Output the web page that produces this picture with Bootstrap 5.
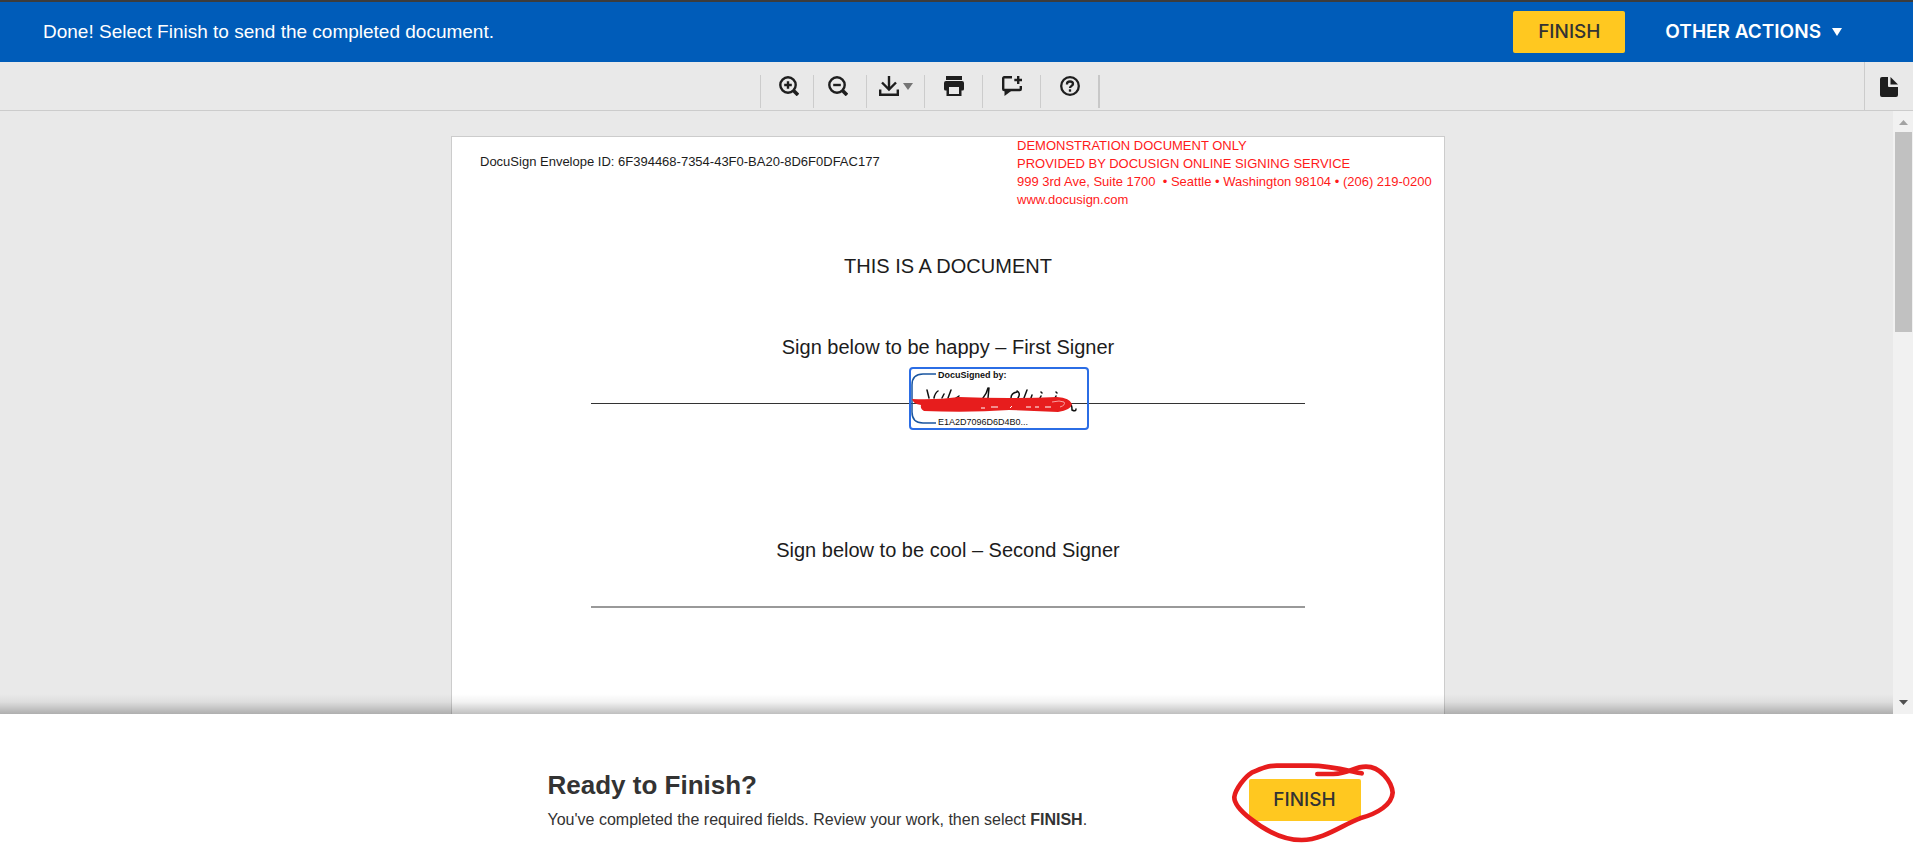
<!DOCTYPE html>
<html lang="en">
<head>
<meta charset="utf-8">
<meta name="viewport" content="width=device-width, initial-scale=1">
<title>Review and finish</title>
<link href="https://cdn.jsdelivr.net/npm/bootstrap@5.3.0/dist/css/bootstrap.min.css" rel="stylesheet">
<style>
  body { font-family: "Liberation Sans", Arial, sans-serif; color: #333; background: #fff; }
  .topbar { background: #005cb9; border-top: 2px solid #3c3c3c; height: 62px; padding-left: 43px; padding-right: 71px; gap: 40px; }
  .topbar-msg { font-size: 19px; line-height: 24px; }
  .btn-finish, .btn-other { font-family: Inter, "Open Sans", sans-serif; font-size: 19px; line-height: 24px; }
  .btn-finish { --bs-btn-bg: #ffc820; --bs-btn-color: #333; --bs-btn-hover-bg: #f0b800; --bs-btn-active-bg: #e6b000;
    --bs-btn-border-width: 0; --bs-btn-border-radius: 2px; width: 112px; height: 42px; padding: 0; font-weight: 500; }
  .btn-other { font-weight: 600; color: #fff; padding: 0; border: 0; }
  .btn-other:hover { color: #fff; }
  .btn-other svg { margin-left: 11px; }
  .tools { background: #e9e9e9; height: 49px; border-bottom: 1px solid #ccc; }
  .tool { width: 58px; height: 33px; margin-top: 13px; padding: 1px 0 0; border: 0; border-left: 1px solid #ccc; background: none; color: #1e1e1e;
    display: flex; justify-content: center; align-items: flex-start; gap: 4px; }
  .tool-sm { width: 53px; }
  .tools-end { width: 2px; height: 33px; margin-top: 13px; background: #c8c8c8; }
  .tool-pages { width: 49px; border: 0; border-left: 1px solid #ccc; background: none; color: #1e1e1e; }
  .viewer { background: #e9e9e9; min-height: 0; }
  .canvas { padding: 25px 0 0 3px; }
  .canvas::after { content: ""; position: absolute; left: 0; right: 0; bottom: 0; height: 20px;
    background: linear-gradient(rgba(0,0,0,0), rgba(0,0,0,.05) 40%, rgba(0,0,0,.25)); }
  .sheet { width: 994px; max-width: 100%; height: 1286px; background: #fff; border: 1px solid #ccc; color: #1c1c1c; margin: 0 auto; }
  .envelope { font-size: 13px; line-height: 18px; padding: 16px 0 0 28px; }
  .demo { font-size: 13px; line-height: 18px; color: #ff1a1a; width: 427px; white-space: pre; }
  .doc-line { font-size: 20px; line-height: 24px; text-align: center; margin: 0; font-weight: 400; }
  .rule { height: 1px; background: #333; margin: 0 139px; }
  .rule-soft { height: 2px; background: #999; }
  .gap-title { margin-top: 45px; }
  .gap-sign { margin-top: 57px; }
  .gap-rule { margin-top: 44px; }
  .gap-next { margin-top: 134px; }
  .signed { left: 318px; top: -36px; width: 180px; height: 63px; border: 2px solid #2b6de5; border-radius: 4px;
    font-size: 9px; line-height: 12px; padding: 0 0 0 27px; color: #111; text-align: left; }
  .signed svg { left: -2px; top: -2px; }
  .bar { width: 20px; background: #f1f1f1; padding: 9px 1px 9px 2px; }
  .bar svg { display: block; margin: 0 auto; }
  .thumb { height: 200px; margin-top: 7px; background: #c1c1c1; }
  .ready { padding: 55px 0 38px; }
  .ready-in { width: 818px; max-width: 100%; padding-right: 5px; }
  .ready h1 { font-size: 26px; line-height: 32px; font-weight: 700; margin: 0 0 9px; }
  .ready p { font-size: 16px; line-height: 20px; margin: 0; }
  .ring { left: -39px; top: -38px; pointer-events: none; }
</style>
</head>
<body class="d-flex flex-column vh-100 overflow-hidden">

<header class="topbar d-flex align-items-center flex-shrink-0">
  <div class="topbar-msg text-white me-auto">Done! Select Finish to send the completed document.</div>
  <button type="button" class="btn btn-finish">FINISH</button>
  <button type="button" class="btn btn-other d-flex align-items-center">OTHER ACTIONS
    <svg width="10" height="8" viewBox="0 0 10 8" fill="#fff" aria-hidden="true"><path d="M0 0h10L5 8z"/></svg>
  </button>
</header>

<div class="tools d-flex flex-shrink-0">
  <div class="d-flex flex-grow-1 justify-content-center pe-1" role="toolbar" aria-label="Document tools">
    <button type="button" class="tool tool-sm ps-1" aria-label="Zoom in">
      <svg width="20" height="20" viewBox="0 0 20 20" fill="none" stroke="currentColor" stroke-width="2.400"><circle cx="9" cy="9" r="7.700"/><path d="M9 5.200v7.600M5.200 9h7.600"/><path d="M14.500 14.500l4.500 4.500" stroke-width="3.600"/></svg>
    </button>
    <button type="button" class="tool tool-sm pe-1" aria-label="Zoom out">
      <svg width="20" height="20" viewBox="0 0 20 20" fill="none" stroke="currentColor" stroke-width="2.400"><circle cx="9" cy="9" r="7.700"/><path d="M5.200 9h7.600"/><path d="M14.500 14.500l4.500 4.500" stroke-width="3.600"/></svg>
    </button>
    <button type="button" class="tool" aria-label="Download">
      <svg width="20" height="20" viewBox="0 0 20 20" fill="none" stroke="currentColor" stroke-width="2.400"><path d="M10 0v13M3 6.500l7 7 7-7"/><path d="M1.200 13.500v5.300h17.600v-5.300"/></svg>
      <svg width="10" height="20" viewBox="0 0 10 20" fill="#757575"><path d="M0 7h10L5 14z"/></svg>
    </button>
    <button type="button" class="tool" aria-label="Print">
      <svg width="20" height="20" viewBox="0 0 20 20" fill="currentColor"><path d="M2 0h16v4H2z"/><path fill-rule="evenodd" d="M2 5h16a2 2 0 0 1 2 2v6a1.500 1.500 0 0 1-1.500 1.500H17.500V20H2.500v-5.500H1.500A1.500 1.500 0 0 1 0 13V7a2 2 0 0 1 2-2zM5 11v7h10v-7z"/></svg>
    </button>
    <button type="button" class="tool" aria-label="Comment">
      <svg width="20" height="20" viewBox="0 0 20 20" fill="none" stroke="currentColor" stroke-width="2.400"><path d="M10 1.200H2.200a1 1 0 0 0-1 1V13a1 1 0 0 0 1 1h15.600a1 1 0 0 0 1-1v-3"/><path d="M16.200 0v8M12.300 4h7.700"/><path d="M2.500 14h8l-8 6z" fill="currentColor" stroke="none"/></svg>
    </button>
    <button type="button" class="tool" aria-label="Help">
      <svg width="20" height="20" viewBox="0 0 20 20" fill="none" stroke="currentColor" stroke-width="2.300"><circle cx="10" cy="10" r="8.800"/><path d="M7 8.500V8a3 2.500 0 0 1 6 0c0 1.800-3 2-3 4"/><path d="M10 13.300v2.400"/></svg>
    </button>
    <div class="tools-end"></div>
  </div>
  <button type="button" class="tool-pages" aria-label="Pages">
    <svg width="18" height="20" viewBox="0 0 18 20" fill="currentColor"><path d="M2 0h6v9a1 1 0 0 0 1 1h9v8a2 2 0 0 1-2 2H2a2 2 0 0 1-2-2V2a2 2 0 0 1 2-2z"/><path d="M10.500 0l7.500 7.500h-7.500z"/></svg>
  </button>
</div>

<main class="viewer d-flex flex-grow-1">
  <div class="canvas position-relative flex-grow-1 overflow-hidden">
    <article class="sheet">
      <div class="d-flex justify-content-between">
        <div class="envelope">DocuSign Envelope ID: 6F394468-7354-43F0-BA20-8D6F0DFAC177</div>
        <div class="demo">DEMONSTRATION DOCUMENT ONLY
PROVIDED BY DOCUSIGN ONLINE SIGNING SERVICE
999 3rd Ave, Suite 1700  • Seattle • Washington 98104 • (206) 219-0200
www.docusign.com</div>
      </div>
      <h2 class="doc-line gap-title">THIS IS A DOCUMENT</h2>
      <p class="doc-line gap-sign">Sign below to be happy – First Signer</p>
      <div class="rule gap-rule position-relative">
        <div class="signed position-absolute d-flex flex-column justify-content-between">
          <b>DocuSigned by:</b>
          <span>E1A2D7096D6D4B0...</span>
          <svg class="position-absolute" width="180" height="63" viewBox="0 0 180 63" fill="none" aria-hidden="true">
            <path d="M27 7H14Q3 7 3 18V45Q3 56 14 56H27" stroke="#1a56a0" stroke-width="1.500"/>
            <path d="M18 23l2 8M29 24q-3 2-4 7M35 27l-2 4M42 23l-3 8M50 29l-3 2M79 21q-1 5-5 10M80 21l-1 10M108 25q-6 1-6 6M108 24q4 2 1 7M118 23l-3 8M123 28l-1 3M132 25l1 1M132 29l-1 2M147 25l1 1M147 29l-1 2M161 38q2-1 2 5q4 2 4-1" stroke="#111" stroke-width="1.500" stroke-linecap="round"/>
            <path d="M3 32Q28 33 50 30Q100 32 148 30Q161 31 163 37Q162 43 149 45L100 43Q60 46 15 44Q11 42 12 38Q4 37 3 32z" fill="#e71d1d"/>
            <path d="M143 35q8-2 12 0q2 3-4 5" stroke="#f9a0a0"/>
            <path d="M72 41h4M82 40h7M101 41l2-2M117 40h5M126 40h4M136 40h6" stroke="#fff" stroke-width="1"/>
          </svg>
        </div>
      </div>
      <p class="doc-line gap-next">Sign below to be cool – Second Signer</p>
      <div class="rule rule-soft gap-rule"></div>
    </article>
  </div>
  <div class="bar d-flex flex-column flex-shrink-0" aria-hidden="true">
    <svg width="9" height="5" viewBox="0 0 9 5" fill="#a3a3a3"><path d="M4.500 0L9 5H0z"/></svg>
    <div class="thumb"></div>
    <svg class="mt-auto" width="9" height="5" viewBox="0 0 9 5" fill="#505050"><path d="M0 0h9L4.500 5z"/></svg>
  </div>
</main>

<footer class="ready flex-shrink-0 bg-white">
  <div class="ready-in mx-auto d-flex justify-content-between align-items-center">
    <div>
      <h1>Ready to Finish?</h1>
      <p>You've completed the required fields. Review your work, then select <b>FINISH</b>.</p>
    </div>
    <div class="position-relative">
      <button type="button" class="btn btn-finish d-block">FINISH</button>
      <svg class="ring position-absolute" width="210" height="120" viewBox="0 0 630 360" fill="none" stroke="#e71d1d" stroke-width="14" stroke-linecap="round" stroke-linejoin="round" aria-hidden="true">
        <path d="M322 99H370C420 97 430 77 468 77C510 77 545 120 548 155C546 190 505 217 450 232C400 250 340 297 275 297C215 297 165 268 120 232C95 212 72 190 73 168C76 145 105 107 125 95C160 79 175 74 200 74H300C360 74 410 88 455 97"/>
      </svg>
    </div>
  </div>
</footer>

<script src="https://cdn.jsdelivr.net/npm/bootstrap@5.3.0/dist/js/bootstrap.bundle.min.js"></script>
</body>
</html>
